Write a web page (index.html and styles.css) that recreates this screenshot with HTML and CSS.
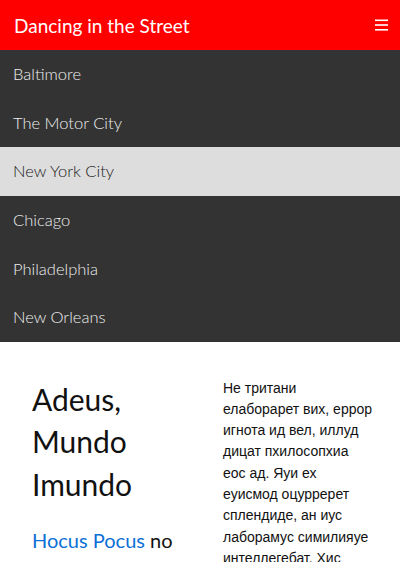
FILE: index.html
```html
<!DOCTYPE html>
<html lang="pt">
<head>
<meta charset="utf-8">
<title>Dancing in the Street</title>
<link rel="stylesheet" href="styles.css">
</head>
<body>
<header class="topbar">
  <span class="brand">Dancing in the Street</span>
  <button class="menu-btn" aria-label="Menu">
    <svg width="13" height="12" viewBox="0 0 13 12"><rect x="0" y="0.5" width="13" height="1.6" fill="#fff"/><rect x="0" y="5.2" width="13" height="1.6" fill="#fff"/><rect x="0" y="10" width="13" height="1.6" fill="#fff"/></svg>
  </button>
</header>
<nav class="menu">
  <a class="menu-item">Baltimore</a>
  <a class="menu-item">The Motor City</a>
  <a class="menu-item active">New York City</a>
  <a class="menu-item">Chicago</a>
  <a class="menu-item">Philadelphia</a>
  <a class="menu-item">New Orleans</a>
</nav>
<main class="content">
  <section class="col-left">
    <h1 class="title">Adeus, Mundo Imundo</h1>
    <p class="lead"><a class="link">Hocus Pocus</a> no</p>
  </section>
  <section class="col-right">
    <p class="body-text">Не тритани елаборарет вих, еррор игнота ид вел, иллуд дицат пхилосопхиа еос ад. Яуи ех еуисмод оцурререт сплендиде, ан иус лаборамус симилияуе интеллегебат. Хис</p>
  </section>
</main>
</body>
</html>
```

FILE: styles.css
```css
* { box-sizing: border-box; }
html, body { margin: 0; padding: 0; }
body {
  font-family: "Lato", "Open Sans", sans-serif;
  background: #fff;
  color: #111;
  width: 400px;
  overflow: hidden;
}
.topbar {
  height: 50px;
  background: #ff0000;
  display: flex;
  align-items: center;
  justify-content: space-between;
  padding: 0 12px 0 14px;
}
.brand {
  color: #fff;
  font-size: 19px;
  font-weight: 400;
}
.menu-btn {
  background: none;
  border: 0;
  padding: 0;
  display: flex;
}
.menu {
  background: #333;
  display: flex;
  flex-direction: column;
}
.menu-item {
  height: 48.6px;
  display: flex;
  align-items: center;
  padding: 0 13px;
  color: #eeeeee;
  font-size: 16.5px;
  font-weight: 300;
}
.menu-item.active {
  background: #dddddd;
  color: #1a1a1a;
}
.content {
  display: grid;
  grid-template-columns: 155px 150px;
  column-gap: 36px;
  padding: 0 27px 0 32px;
}
.title {
  margin: 36px 0 0;
  font-size: 30px;
  line-height: 42.5px;
  font-weight: 400;
  color: #111;
}
.lead {
  margin: 20px 0 0;
  font-size: 20px;
  line-height: 30px;
  color: #111;
}
.link { color: #0b6fd6; }
.body-text {
  margin: 36px 0 0;
  font-family: "Liberation Sans", Arial, sans-serif;
  font-size: 14px;
  line-height: 21.3px;
  color: #111;
}
```
